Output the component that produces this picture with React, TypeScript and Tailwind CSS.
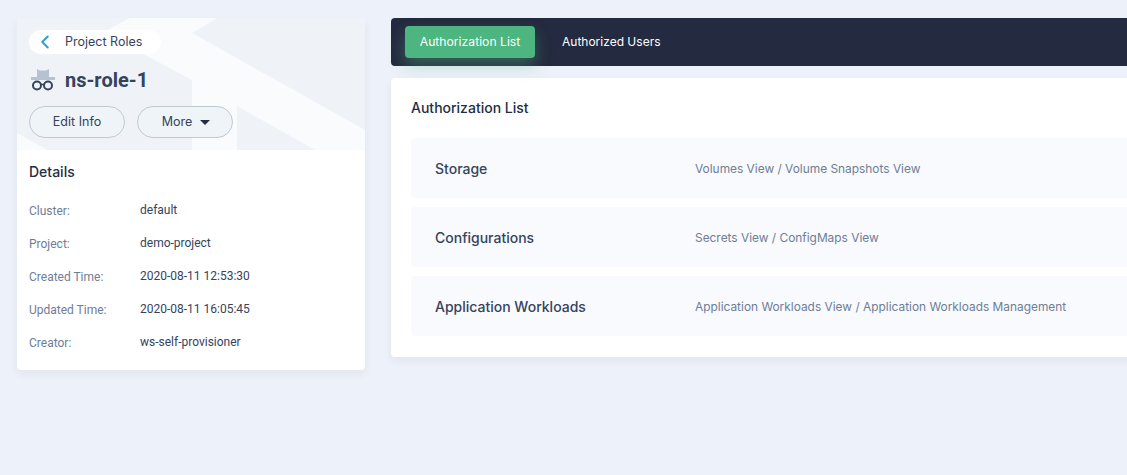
import React from "react";
import { ChevronLeft } from "lucide-react";

const details = [
  { label: "Cluster:", value: "default" },
  { label: "Project:", value: "demo-project" },
  { label: "Created Time:", value: "2020-08-11 12:53:30" },
  { label: "Updated Time:", value: "2020-08-11 16:05:45" },
  { label: "Creator:", value: "ws-self-provisioner" },
];

const authorizations = [
  { name: "Storage", items: "Volumes View / Volume Snapshots View" },
  { name: "Configurations", items: "Secrets View / ConfigMaps View" },
  { name: "Application Workloads", items: "Application Workloads View / Application Workloads Management" },
];

const RoleIcon = () => (
  <svg width="26" height="24" viewBox="0 0 26 24" className="shrink-0">
    <path d="M8 1 L11 2.5 L17 2.5 L20 1 L20 9 L8 9 Z" fill="#b6c2cf" />
    <rect x="2" y="9" width="24" height="3" fill="#b6c2cf" />
    <circle cx="8" cy="17.5" r="4" fill="none" stroke="#36435c" strokeWidth="2" />
    <circle cx="19" cy="17.5" r="4" fill="none" stroke="#36435c" strokeWidth="2" />
    <path d="M11.5 16.5 L15.5 16.5" stroke="#36435c" strokeWidth="1.5" />
  </svg>
);

const App = () => {
  return (
    <div className="h-[475px] w-[1127px] overflow-hidden bg-[#edf1f9] font-['Inter',sans-serif] text-[#242e42]">
      <div className="flex items-start gap-[26px] pl-[17px] pt-[18px]">
        {/* Left card */}
        <div className="w-[348px] shrink-0 overflow-hidden rounded-[4px] bg-white shadow-[0_4px_8px_0_rgba(36,46,66,0.06)]">
          <div className="relative h-[132px] overflow-hidden bg-[#eff3f8] px-3 pt-3">
            <svg className="absolute left-0 top-0" width="348" height="132" viewBox="0 0 348 132">
              <path d="M113 0 L200 0 L175 15 L348 112 L348 132 L298 132 L220 88 L220 132 L175 132 L175 62 L128 37 L90 12 Z" fill="#f9fbfd" />
              <path d="M0 115 L30 132 L0 132 Z" fill="#f9fbfd" />
            </svg>
            <div className="relative">
              <div className="flex h-6 w-[132px] items-center rounded-full bg-white">
                <ChevronLeft className="ml-[5px] h-[22px] w-[22px] text-[#329dce]" strokeWidth={2.2} />
                <span className="ml-[9px] text-[12.5px] text-[#36435c]">Project Roles</span>
              </div>
              <div className="mt-[12px] flex h-[28px] items-center">
                <RoleIcon />
                <span className="ml-[10px] font-['Roboto',sans-serif] text-[20px] font-bold leading-7 text-[#36435c]">ns-role-1</span>
              </div>
              <div className="mt-[12px] flex gap-3">
                <button className="h-8 w-[96px] rounded-full border border-[#c1c9d1] bg-[#eff4f9] text-[12.5px] text-[#36435c]">
                  Edit Info
                </button>
                <button className="flex h-8 w-[96px] items-center justify-center gap-[8px] rounded-full border border-[#c1c9d1] bg-[#eff4f9] pl-[2px] text-[12.5px] text-[#36435c]">
                  More
                  <span className="h-0 w-0 border-x-[5px] border-t-[5px] border-x-transparent border-t-[#242e42]" />
                </button>
              </div>
            </div>
          </div>
          <div className="px-3 pb-[12px] pt-[13px]">
            <h3 className="text-[14px] font-medium leading-[18px] text-[#242e42]">Details</h3>
            <div className="mt-[12px] font-['Roboto',sans-serif]">
              {details.map((item) => (
                <div key={item.label} className="flex h-[33px] items-center text-[12px]">
                  <span className="w-[111px] translate-y-px text-[#6f7d95]">{item.label}</span>
                  <span className="text-[#36435c]">{item.value}</span>
                </div>
              ))}
            </div>
          </div>
        </div>

        {/* Right column */}
        <div className="w-[760px] shrink-0">
          <div className="flex h-12 items-center gap-3 rounded-[4px] bg-[#242a3f] px-[14px]">
            <div className="flex h-8 w-[130px] items-center justify-center rounded-[4px] bg-[#4cb580] text-[12.2px] text-white shadow-[0_8px_16px_0_rgba(85,188,138,0.36)]">
              Authorization List
            </div>
            <div className="flex h-8 items-center px-[15px] text-[12px] text-white">Authorized Users</div>
          </div>
          <div className="mt-3 rounded-[4px] bg-white p-5 pb-[21px] shadow-[0_4px_8px_0_rgba(36,46,66,0.06)]">
            <h3 className="text-[14px] font-medium leading-5 text-[#242e42]">Authorization List</h3>
            <div className="mt-5 flex flex-col gap-[9px]">
              {authorizations.map((row) => (
                <div key={row.name} className="flex h-[60px] items-center rounded-[4px] bg-[#f8fafe] px-6 pt-[2px]">
                  <span className="w-[260px] -translate-y-px text-[14px] font-medium text-[#36435c]">{row.name}</span>
                  <span className="text-[11.9px] text-[#6f7d95]">{row.items}</span>
                </div>
              ))}
            </div>
          </div>
        </div>
      </div>
    </div>
  );
};

export default App;
